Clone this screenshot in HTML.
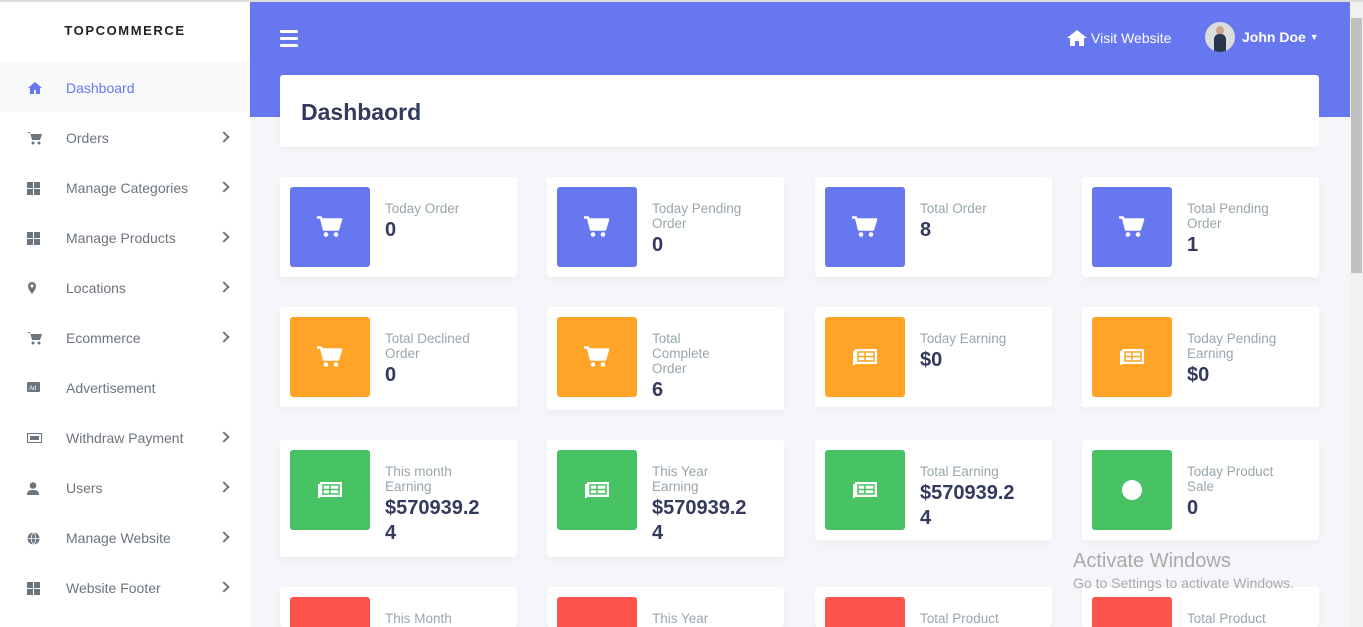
<!DOCTYPE html>
<html style="width:1363px;height:627px;overflow:hidden"><head><meta charset="utf-8"><style>
*{box-sizing:border-box;margin:0;padding:0}
body{width:1363px;height:627px;overflow:hidden;background:#f4f6f9;font-family:"Liberation Sans",sans-serif;position:relative}
.topline{position:absolute;left:0;top:0;width:1363px;height:2px;background:#dcdcdc}
.side{position:absolute;left:0;top:2px;width:250px;height:625px;background:#fff}
.brand{height:60px;text-align:center;line-height:58px;font-size:13px;font-weight:bold;letter-spacing:1.6px;color:#222}
.item{position:absolute;left:0;width:250px;height:50px;display:flex;align-items:center;font-size:14px;color:#6c757d;padding-top:2px}
.item.act{background:#f8f9fb;color:#6777ef}
.item .ic{width:66px;padding-left:27px;display:flex}
.item .ar{position:absolute;left:220px;top:21px;width:8px;height:8px;border-right:2px solid #777;border-top:2px solid #777;transform:rotate(45deg)}
.hdr{position:absolute;left:250px;top:2px;width:1100px;height:115px;background:#6777ef}
.burger{position:absolute;left:280px;top:30px}
.burger i{display:block;width:18px;height:3px;background:#fff;margin-bottom:4px;border-radius:1px}
.visit{position:absolute;left:1067px;top:29px;color:#fff;font-size:14px;display:flex;align-items:center;gap:4px}
.user{position:absolute;left:1205px;top:22px;display:flex;align-items:center;color:#fff;font-weight:bold;font-size:14px}
.av{width:30px;height:30px;border-radius:50%;background:#ddd;margin-right:7px;position:relative;overflow:hidden}
.av:after{content:"";position:absolute;left:9px;top:12px;width:12px;height:20px;background:#2a3550;border-radius:5px 5px 0 0}
.av:before{content:"";position:absolute;left:11px;top:4px;width:8px;height:9px;background:#c9a58b;border-radius:50%}
.head{position:absolute;left:280px;top:75px;width:1039px;height:72px;background:#fff;border-radius:3px;box-shadow:0 2px 6px rgba(0,0,0,.04)}
.head h1{font-size:23px;color:#34395e;position:absolute;left:21px;top:24px}
.card{position:absolute;width:237px;background:#fff;border-radius:3px;box-shadow:0 3px 8px rgba(0,0,0,.04)}
.card .box{position:absolute;left:10px;top:10px;width:80px;height:80px;border-radius:3px;display:flex;align-items:center;justify-content:center}
.card .t{position:absolute;left:105px;top:24px;font-size:13.5px;line-height:15px;color:#98a6ad}
.card .v{font-size:20px;font-weight:bold;color:#34395e;line-height:25px;margin-top:2px}
.b{background:#6777ef}.o{background:#ffa426;color:#ffa426}.g{background:#47c363;color:#47c363}.r{background:#fc544b}
.sb{position:absolute;left:1350px;top:2px;width:13px;height:625px;background:#f1f1f1}
.sb i{position:absolute;left:1px;top:16px;width:11px;height:255px;background:#c1c1c1}
.wm{position:absolute;left:1073px;top:550px;color:#aaa}
</style></head><body>
<div class="topline"></div>
<div class="side">
<div class="brand">TOPCOMMERCE</div>
</div>
<div style="position:absolute;left:0;top:0">
<div class="item act" style="top:62px"><span class="ic"><svg width="16" height="14" viewBox="0 0 16 14"><path d="M8 1L1 7h2v6h4V9h2v4h4V7h2z" fill="#6777ef"/></svg></span>Dashboard</div>
<div class="item" style="top:112px"><span class="ic"><svg width="15" height="14" viewBox="0 0 15 14"><path d="M0 1h3l2 8h8l2-6H4" fill="#6c757d"/><circle cx="6" cy="12" r="1.5" fill="#6c757d"/><circle cx="12" cy="12" r="1.5" fill="#6c757d"/></svg></span>Orders<i class="ar"></i></div>
<div class="item" style="top:162px"><span class="ic"><svg width="14" height="13"><rect width="6" height="6" fill="#6c757d"/><rect x="7" width="6" height="6" fill="#6c757d"/><rect y="7" width="6" height="6" fill="#6c757d"/><rect x="7" y="7" width="6" height="6" fill="#6c757d"/></svg></span>Manage Categories<i class="ar"></i></div>
<div class="item" style="top:212px"><span class="ic"><svg width="14" height="13"><rect width="6" height="6" fill="#6c757d"/><rect x="7" width="6" height="6" fill="#6c757d"/><rect y="7" width="6" height="6" fill="#6c757d"/><rect x="7" y="7" width="6" height="6" fill="#6c757d"/></svg></span>Manage Products<i class="ar"></i></div>
<div class="item" style="top:262px"><span class="ic"><svg width="14" height="14" viewBox="0 0 14 14"><path d="M5 13C1 8 1 6 1 5a4 4 0 018 0c0 1 0 3-4 8z" fill="#6c757d"/><circle cx="5" cy="5" r="1.5" fill="#fff"/></svg></span>Locations<i class="ar"></i></div>
<div class="item" style="top:312px"><span class="ic"><svg width="15" height="14" viewBox="0 0 15 14"><path d="M0 1h3l2 8h8l2-6H4" fill="#6c757d"/><circle cx="6" cy="12" r="1.5" fill="#6c757d"/><circle cx="12" cy="12" r="1.5" fill="#6c757d"/></svg></span>Ecommerce<i class="ar"></i></div>
<div class="item" style="top:362px"><span class="ic"><svg width="14" height="12"><rect width="13" height="10" rx="1" fill="#6c757d"/><text x="2" y="8" font-size="6" fill="#fff" font-family="Liberation Sans">Ad</text></svg></span>Advertisement</div>
<div class="item" style="top:412px"><span class="ic"><svg width="15" height="12"><rect x="0.5" y="1.5" width="14" height="9" fill="none" stroke="#6c757d"/><rect x="3" y="4" width="9" height="4" fill="#6c757d"/></svg></span>Withdraw Payment<i class="ar"></i></div>
<div class="item" style="top:462px"><span class="ic"><svg width="12" height="13"><circle cx="6" cy="3.5" r="3.3" fill="#6c757d"/><path d="M0 13c0-4 2-5 6-5s6 1 6 5z" fill="#6c757d"/></svg></span>Users<i class="ar"></i></div>
<div class="item" style="top:512px"><span class="ic"><svg width="13" height="13"><circle cx="6.5" cy="6.5" r="6" fill="#6c757d"/><path d="M0.5 6.5h12M6.5 .5c-3 3-3 9 0 12M6.5.5c3 3 3 9 0 12" stroke="#fff" fill="none" stroke-width=".8"/></svg></span>Manage Website<i class="ar"></i></div>
<div class="item" style="top:562px"><span class="ic"><svg width="14" height="13"><rect width="6" height="6" fill="#6c757d"/><rect x="7" width="6" height="6" fill="#6c757d"/><rect y="7" width="6" height="6" fill="#6c757d"/><rect x="7" y="7" width="6" height="6" fill="#6c757d"/></svg></span>Website Footer<i class="ar"></i></div>
</div>
<div class="hdr"></div>
<div class="burger"><i></i><i></i><i></i></div>
<div class="visit"><svg width="20" height="17" viewBox="0 0 20 17"><path d="M10 1L0 9h3v8h5v-5h4v5h5V9h3z" fill="#fff"/></svg>Visit Website</div>
<div class="user"><div class="av"></div>John Doe <span style="font-size:9px;margin-left:4px">▼</span></div>
<div class="head"><h1>Dashbaord</h1></div>

<svg width="0" height="0" style="position:absolute"><defs>
<symbol id="cart" viewBox="0 0 26 22"><path d="M0 1.5h4l3 12h14l3-10H5.5" fill="#fff" stroke="#fff" stroke-width="2.5" stroke-linejoin="round"/><circle cx="9" cy="18.5" r="2.3" fill="#fff"/><circle cx="19" cy="18.5" r="2.3" fill="#fff"/></symbol>
<symbol id="money" viewBox="0 0 26 18"><rect x="3" y="1" width="22" height="15" fill="#fff"/><rect x="1" y="3" width="2" height="14" fill="#fff"/><rect x="6" y="4" width="16" height="9" fill="none" stroke="currentColor" stroke-width="1.5"/><path d="M13 4v9M13 8.5h9M6 8.5h7" stroke="currentColor" stroke-width="1.5"/></symbol>
</defs></svg>

<div class="card" style="left:280px;top:177px;height:100px"><div class="box b"><svg width="26" height="22"><use href="#cart"/></svg></div><div class="t">Today Order<div class="v">0</div></div></div>
<div class="card" style="left:547px;top:177px;height:100px"><div class="box b"><svg width="26" height="22"><use href="#cart"/></svg></div><div class="t">Today Pending<br>Order<div class="v">0</div></div></div>
<div class="card" style="left:815px;top:177px;height:100px"><div class="box b"><svg width="26" height="22"><use href="#cart"/></svg></div><div class="t">Total Order<div class="v">8</div></div></div>
<div class="card" style="left:1082px;top:177px;height:100px"><div class="box b"><svg width="26" height="22"><use href="#cart"/></svg></div><div class="t">Total Pending<br>Order<div class="v">1</div></div></div>

<div class="card" style="left:280px;top:307px;height:100px"><div class="box o"><svg width="26" height="22"><use href="#cart"/></svg></div><div class="t">Total Declined<br>Order<div class="v">0</div></div></div>
<div class="card" style="left:547px;top:307px;height:103px"><div class="box o"><svg width="26" height="22"><use href="#cart"/></svg></div><div class="t">Total<br>Complete<br>Order<div class="v">6</div></div></div>
<div class="card" style="left:815px;top:307px;height:100px"><div class="box o"><svg width="26" height="18"><use href="#money"/></svg></div><div class="t">Today Earning<div class="v">$0</div></div></div>
<div class="card" style="left:1082px;top:307px;height:100px"><div class="box o"><svg width="26" height="18"><use href="#money"/></svg></div><div class="t">Today Pending<br>Earning<div class="v">$0</div></div></div>

<div class="card" style="left:280px;top:440px;height:117px"><div class="box g"><svg width="26" height="18"><use href="#money"/></svg></div><div class="t">This month<br>Earning<div class="v">$570939.2<br>4</div></div></div>
<div class="card" style="left:547px;top:440px;height:117px"><div class="box g"><svg width="26" height="18"><use href="#money"/></svg></div><div class="t">This Year<br>Earning<div class="v">$570939.2<br>4</div></div></div>
<div class="card" style="left:815px;top:440px;height:100px"><div class="box g"><svg width="26" height="18"><use href="#money"/></svg></div><div class="t">Total Earning<div class="v">$570939.2<br>4</div></div></div>
<div class="card" style="left:1082px;top:440px;height:100px"><div class="box g"><svg width="22" height="22"><circle cx="11" cy="11" r="10" fill="#fff"/></svg></div><div class="t">Today Product<br>Sale<div class="v">0</div></div></div>

<div class="card" style="left:280px;top:587px;height:40px;overflow:hidden"><div class="box r"></div><div class="t">This Month</div></div>
<div class="card" style="left:547px;top:587px;height:40px;overflow:hidden"><div class="box r"></div><div class="t">This Year</div></div>
<div class="card" style="left:815px;top:587px;height:40px;overflow:hidden"><div class="box r"></div><div class="t">Total Product</div></div>
<div class="card" style="left:1082px;top:587px;height:40px;overflow:hidden"><div class="box r"></div><div class="t">Total Product</div></div>

<div class="wm"><div style="font-size:20px">Activate Windows</div><div style="font-size:14px;margin-top:2px">Go to Settings to activate Windows.</div></div>
<div class="sb"><i></i></div>
</body></html>
